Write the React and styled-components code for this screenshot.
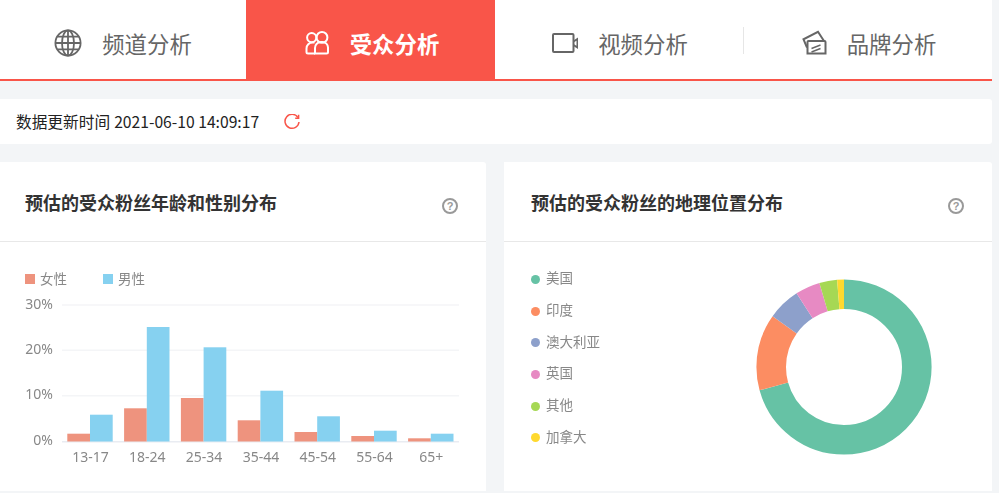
import styled, { createGlobalStyle } from "styled-components";

const RED = "#f95549";

const GlobalStyle = createGlobalStyle`
    html, body {
        margin: 0;
        padding: 0;
        background: #f3f5f7;
        overflow: hidden;
    }
    body {
        font-family: "Noto Sans CJK SC", "Noto Sans", sans-serif;
    }
`;

const Page = styled.div`
    width: 992px;
    height: 493px;
    overflow: hidden;
`;

const TabBar = styled.div`
    display: grid;
    grid-template-columns: 246px 249px 248px 249px;
    height: 79px;
    background: #fff;
    border-bottom: 2px solid ${RED};
`;

const Tab = styled.div`
    position: relative;
    display: flex;
    align-items: center;
    justify-content: center;
    gap: 20px;
    padding-top: 7px;
    box-sizing: border-box;
    background: ${(p) => (p.$active ? RED : "#fff")};
    color: ${(p) => (p.$active ? "#fff" : "#666")};
    font-size: 22.4px;
    font-weight: ${(p) => (p.$active ? 700 : 400)};
    line-height: 30px;
    ${(p) =>
        p.$divided &&
        `&::before {
            content: "";
            position: absolute;
            left: 0;
            top: 27px;
            height: 27px;
            width: 1px;
            background: #e6e6e6;
        }`}
`;

const InfoBar = styled.div`
    display: flex;
    align-items: center;
    height: 45px;
    margin-top: 18px;
    padding-left: 16px;
    background: #fff;
    border-radius: 0 3px 3px 0;
    color: #222;
    font-size: 15.7px;
`;

const UpdateTime = styled.span`
    margin-left: 4px;
`;

const RefreshIcon = styled.svg`
    margin-left: 25px;
    flex: none;
`;

const Cards = styled.div`
    display: grid;
    grid-template-columns: 486px 488px;
    gap: 18px;
    margin-top: 18px;
`;

const Card = styled.section`
    height: 329px;
    background: #fff;
    border-radius: 0 3px 0 0;
`;

const CardHeader = styled.header`
    display: flex;
    align-items: center;
    justify-content: space-between;
    box-sizing: border-box;
    height: 80px;
    padding: 0 28px 0 ${(p) => p.$left}px;
    border-bottom: 1px solid #e8e8e8;
`;

const CardTitle = styled.h2`
    margin: 0;
    color: #333;
    font-size: 18px;
    font-weight: 700;
    line-height: 26px;
`;

const HelpIcon = styled.svg`
    flex: none;
    margin-top: 8px;
    text {
        font-family: "Liberation Sans", sans-serif;
        font-size: 11px;
        font-weight: 700;
        fill: #999;
    }
`;

const GenderLegend = styled.div`
    display: flex;
    gap: 36px;
    padding: 26px 0 0 25px;
    height: 20px;
    filter: blur(0.35px);
`;

const GenderItem = styled.span`
    display: flex;
    align-items: center;
    gap: 5.5px;
    color: #888;
    font-size: 13.5px;
    line-height: 20px;
    &::before {
        content: "";
        width: 9.5px;
        height: 9.5px;
        margin-top: 2px;
        background: ${(p) => p.$color};
    }
`;

const BarChart = styled.svg`
    display: block;
    margin-top: 7px;
    filter: blur(0.35px);
    text {
        font-family: "Noto Sans", sans-serif;
        font-size: 14px;
        fill: #888;
    }
`;

const GeoBody = styled.div`
    display: flex;
    justify-content: space-between;
    padding-right: 58px;
`;

const GeoLegend = styled.ul`
    list-style: none;
    margin: 0;
    padding: 19.5px 0 0 27px;
    filter: blur(0.35px);
`;

const GeoItem = styled.li`
    display: flex;
    align-items: center;
    gap: 6px;
    height: 31.7px;
    color: #888;
    font-size: 13.5px;
    &::before {
        content: "";
        width: 9px;
        height: 9px;
        margin-top: 4px;
        border-radius: 50%;
        background: ${(p) => p.$color};
    }
`;

const Donut = styled.svg`
    display: block;
    margin-top: 35px;
    flex: none;
    filter: blur(0.3px);
`;

const FEMALE = "#ee937e";
const MALE = "#86d1f0";

const ages = [
    { label: "13-17", f: 433.7, m: 414.7 },
    { label: "18-24", f: 408.3, m: 327 },
    { label: "25-34", f: 398, m: 347.3 },
    { label: "35-44", f: 420.3, m: 390.7 },
    { label: "45-54", f: 432, m: 416.3 },
    { label: "55-64", f: 436, m: 430.7 },
    { label: "65+", f: 438.3, m: 433.7 },
];

const ticks = [
    { label: "30%", y: 305 },
    { label: "20%", y: 350.3 },
    { label: "10%", y: 395.7 },
    { label: "0%", y: 441.8 },
];

const geo = [
    { name: "美国", color: "#66c2a5", to: 254.5 },
    { name: "印度", color: "#fc8d62", to: 305.4 },
    { name: "澳大利亚", color: "#8da0cb", to: 327.2 },
    { name: "英国", color: "#e78ac3", to: 343.6 },
    { name: "其他", color: "#a6d854", to: 355.4 },
    { name: "加拿大", color: "#ffd92f", to: 360 },
];

const GlobeGlyph = () => (
    <svg width="28" height="28" viewBox="0 0 28 28" fill="none" stroke="currentColor" strokeWidth="1.8">
        <circle cx="14" cy="14" r="12.6" />
        <ellipse cx="14" cy="14" rx="6" ry="12.6" />
        <path d="M14 1.4v25.2M1.4 14h25.2M3.4 7.6h21.2M3.4 20.4h21.2" />
    </svg>
);

const PeopleGlyph = () => (
    <svg width="28" height="28" viewBox="0 0 28 28" fill="none" stroke="currentColor" strokeWidth="2">
        <circle cx="9.7" cy="8.6" r="4.6" />
        <circle cx="20" cy="8.4" r="5.4" />
        <path d="M13 24.500H6a1.500 1.500 0 0 1-1.500-1.500v-3.500a6 6 0 0 1 6-6h2" />
        <path d="M13 24.500v-5.500a6 6 0 0 1 6-6h1.500a5.500 5.500 0 0 1 5.500 5.500v4.500a1.500 1.500 0 0 1-1.500 1.500Z" />
    </svg>
);

const CameraGlyph = () => (
    <svg width="28" height="28" viewBox="0 0 28 28" fill="none" stroke="currentColor" strokeWidth="2">
        <rect x="3" y="5" width="20.500" height="18" rx="1" />
        <path d="M23.500 12.500l4-2.500v8.500l-4-2.500" />
    </svg>
);

const BrandGlyph = () => (
    <svg width="28" height="28" viewBox="0 0 28 28" fill="none" stroke="currentColor" strokeWidth="2">
        <path d="M8.500 24.500V13a1 1 0 0 1 1-1h16a1 1 0 0 1 1 1v11.500Z" />
        <path d="M8 18.500L4.500 10.300 19 2.800l6 9.200" />
        <path d="M12.500 19.500l9-3.500M12.500 23l9-3.500" strokeWidth="1.400" />
    </svg>
);

const Help = () => (
    <HelpIcon width="16" height="16" viewBox="0 0 16 16">
        <circle cx="8" cy="8" r="7" fill="none" stroke="#999" strokeWidth="2" />
        <text x="8" y="12" textAnchor="middle">?</text>
    </HelpIcon>
);

const tabs = [
    { label: "频道分析", Glyph: GlobeGlyph },
    { label: "受众分析", Glyph: PeopleGlyph, active: true },
    { label: "视频分析", Glyph: CameraGlyph },
    { label: "品牌分析", Glyph: BrandGlyph, divided: true },
];

const App = () => {
    let from = 0;
    return (
        <Page>
            <GlobalStyle />
            <TabBar>
                {tabs.map(({ label, Glyph, active, divided }) => (
                    <Tab key={label} $active={active} $divided={divided}>
                        <Glyph />
                        {label}
                    </Tab>
                ))}
            </TabBar>

            <InfoBar>
                数据更新时间
                <UpdateTime>2021-06-10 14:09:17</UpdateTime>
                <RefreshIcon width="16" height="16" viewBox="0 0 16 16" fill="none" stroke={RED} strokeWidth="1.500">
                    <path d="M14 3.600A7 7 0 1 0 15 8" />
                    <path d="M14.600 0.800v3.400h-3.400" />
                </RefreshIcon>
            </InfoBar>

            <Cards>
                <Card>
                    <CardHeader $left={25}>
                        <CardTitle>预估的受众粉丝年龄和性别分布</CardTitle>
                        <Help />
                    </CardHeader>
                    <GenderLegend>
                        <GenderItem $color={FEMALE}>女性</GenderItem>
                        <GenderItem $color={MALE}>男性</GenderItem>
                    </GenderLegend>
                    <BarChart width="486" height="190" viewBox="0 295 486 190">
                        {ticks.map((t) => (
                            <g key={t.label}>
                                <line x1="62" x2="459" y1={t.y} y2={t.y} stroke={t.y > 440 ? "#e9ecf2" : "#f4f5f7"} strokeWidth="1.500" />
                                <text x="53" y={t.y + 3.5} textAnchor="end">{t.label}</text>
                            </g>
                        ))}
                        {ages.map((a, i) => {
                            const x = 67.3 + i * 56.8;
                            return (
                                <g key={a.label}>
                                    <rect x={x} y={a.f} width="22.700" height={441.5 - a.f} fill={FEMALE} />
                                    <rect x={x + 22.7} y={a.m} width="22.700" height={441.5 - a.m} fill={MALE} />
                                    <text x={x + 23.2} y="462" textAnchor="middle">{a.label}</text>
                                </g>
                            );
                        })}
                    </BarChart>
                </Card>

                <Card>
                    <CardHeader $left={27}>
                        <CardTitle>预估的受众粉丝的地理位置分布</CardTitle>
                        <Help />
                    </CardHeader>
                    <GeoBody>
                        <GeoLegend>
                            {geo.map((g) => (
                                <GeoItem key={g.name} $color={g.color}>{g.name}</GeoItem>
                            ))}
                        </GeoLegend>
                        <Donut width="180" height="180" viewBox="0 0 180 180">
                            <g transform="rotate(-90 90 90)" fill="none" strokeWidth="29.600">
                                {geo.map((g) => {
                                    const seg = (
                                        <circle
                                            key={g.name}
                                            cx="90"
                                            cy="90"
                                            r="72.800"
                                            pathLength="360"
                                            stroke={g.color}
                                            strokeDasharray={`${g.to - from} 360`}
                                            strokeDashoffset={-from}
                                        />
                                    );
                                    from = g.to;
                                    return seg;
                                })}
                            </g>
                        </Donut>
                    </GeoBody>
                </Card>
            </Cards>
        </Page>
    );
};

export default App;
